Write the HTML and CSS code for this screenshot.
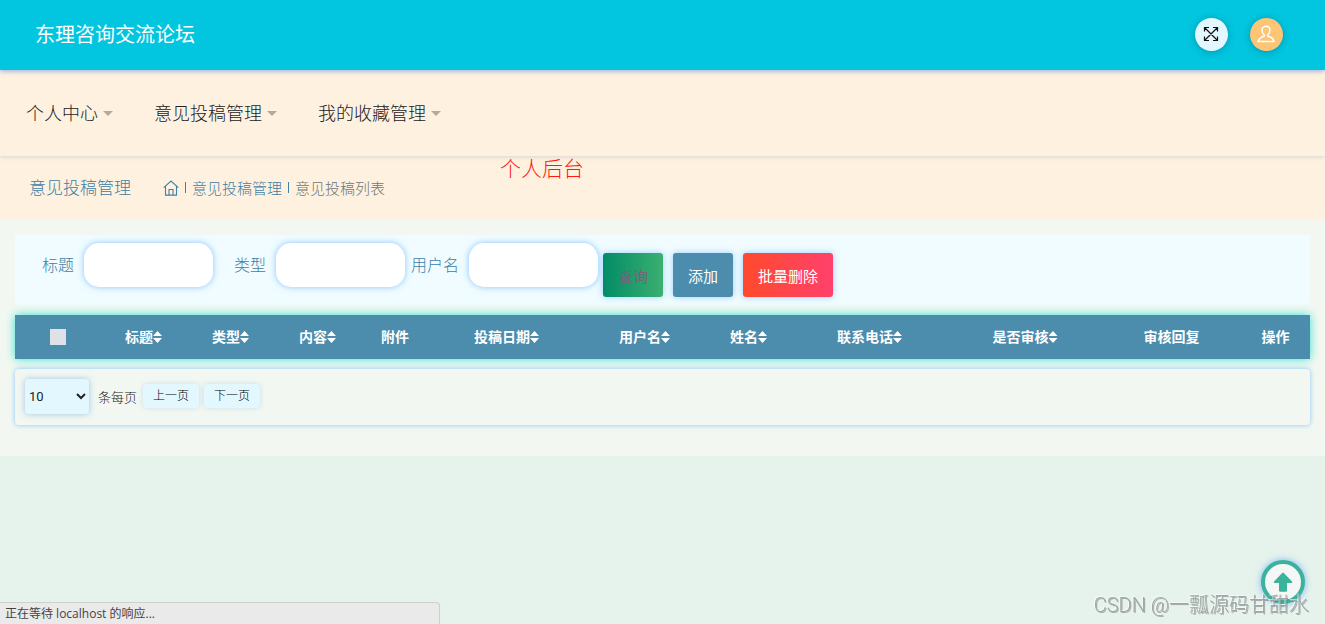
FILE: index.html
```html
<!DOCTYPE html>
<html lang="zh-CN">
<head>
<meta charset="utf-8">
<title>东理咨询交流论坛</title>
<link rel="stylesheet" href="styles.css">
</head>
<body>
<header class="topbar">
  <h1 class="brand">东理咨询交流论坛</h1>
  <div class="tools">
    <button class="tool" type="button" aria-label="全屏">
      <svg width="17" height="17" viewBox="0 0 17 17" fill="none" stroke="#111" stroke-width="1.2"><path d="M1.500 1.500l13 13M14.500 1.500l-13 13M1.500 5.500v-4h4.500M10 1.500h4.500v4M14.500 10.500v4H10M6 14.500H1.500v-4"/></svg>
    </button>
    <button class="tool tool-user" type="button" aria-label="用户">
      <svg width="19" height="18" viewBox="0 0 19 18" fill="none" stroke="#fff" stroke-width="1.4"><path d="M7.200 9.800C5.600 8.800 5 7.200 5 5.200 5 2.600 6.500 1.200 9 1.200s4 1.400 4 4c0 2-.6 3.600-2.200 4.600v1.400c3.200.6 5.400 2 6.200 5.300H1c.8-3.300 3-4.700 6.200-5.300z"/></svg>
    </button>
  </div>
</header>
<nav class="menu">
  <a class="menu-link" href="#">个人中心</a>
  <a class="menu-link" href="#">意见投稿管理</a>
  <a class="menu-link" href="#">我的收藏管理</a>
</nav>
<main class="content">
  <div class="crumbs">
    <h2 class="page-title">意见投稿管理</h2>
    <div class="trail">
      <a class="home" href="#" aria-label="首页"><svg width="16" height="16" viewBox="0 0 16 16" fill="none" stroke="currentColor" stroke-width="1.100"><path d="M.7 7.600L8 1l7.300 6.600M2.500 6.200v8.900h11V6.200M6 15V9.500h4V15"/></svg></a>
      <span class="sep"></span>
      <a class="crumb" href="#">意见投稿管理</a>
      <span class="sep"></span>
      <span class="current">意见投稿列表</span>
    </div>
    <span class="note">个人后台</span>
  </div>
  <div class="panel">
    <form class="search">
      <label class="label" for="title">标题</label>
      <input class="field" id="title" type="text">
      <label class="label label-wide" for="type">类型</label>
      <input class="field" id="type" type="text">
      <label class="label label-near" for="user">用户名</label>
      <input class="field" id="user" type="text">
      <div class="actions">
        <button class="btn btn-query" type="button">查询</button>
        <button class="btn" type="button">添加</button>
        <button class="btn btn-delete" type="button">批量删除</button>
      </div>
    </form>
    <table class="list">
      <colgroup>
        <col class="c-check"><col class="c-short"><col class="c-type"><col class="c-short"><col class="c-file"><col class="c-date"><col class="c-user"><col class="c-short"><col class="c-phone"><col class="c-audit"><col class="c-reply"><col class="c-action">
      </colgroup>
      <thead>
        <tr>
          <th><input class="check" type="checkbox" aria-label="全选"></th>
          <th><span class="sort">标题</span></th>
          <th><span class="sort">类型</span></th>
          <th><span class="sort">内容</span></th>
          <th>附件</th>
          <th><span class="sort">投稿日期</span></th>
          <th><span class="sort">用户名</span></th>
          <th><span class="sort">姓名</span></th>
          <th><span class="sort">联系电话</span></th>
          <th><span class="sort">是否审核</span></th>
          <th>审核回复</th>
          <th>操作</th>
        </tr>
      </thead>
    </table>
    <div class="pager">
      <select class="size" id="size"><option>10</option></select>
      <label class="size-label" for="size">条每页</label>
      <button class="page-btn" type="button">上一页</button>
      <button class="page-btn" type="button">下一页</button>
    </div>
  </div>
</main>
<button class="to-top" type="button" aria-label="返回顶部">
  <svg width="20" height="20" viewBox="0 0 20 20" fill="#3bb39c"><path d="M9.200 1a1 1 0 0 1 1.600 0l8 8.300c.8.9.4 1.700-.6 1.700H14v7.500c0 .8-.4 1.200-1 1.200H7c-.6 0-1-.4-1-1.200V11H1.800c-1 0-1.400-.8-.6-1.700z"/></svg>
</button>
<div class="watermark">CSDN @一瓢源码甘甜水</div>
<div class="status">正在等待 localhost 的响应...</div>
</body>
</html>
```
FILE: styles.css
```css
* { box-sizing: border-box; }
body {
  margin: 0;
  min-height: 100vh;
  background: #e6f3ec;
  color: #222;
  font-family: "Open Sans", "Noto Sans CJK SC", sans-serif;
  font-weight: 300;
  font-size: 14px;
}
a { color: inherit; text-decoration: none; }
button, input, select { font: inherit; border: 0; }
svg { display: block; }
h1, h2 { margin: 0; font-weight: 300; }

.topbar {
  position: relative;
  z-index: 3;
  display: flex;
  align-items: center;
  justify-content: space-between;
  height: 70px;
  padding: 0 42px 0 35px;
  background: #02c5df;
  box-shadow: 0 1px 5px rgba(70, 120, 220, .6);
}
.brand { color: #fff; font-size: 20px; line-height: 30px; font-weight: 400; }
.tools { display: flex; gap: 22px; padding-bottom: 2px; }
.tool {
  display: grid;
  place-items: center;
  width: 33px;
  height: 33px;
  padding: 0;
  border-radius: 50%;
  background: #e3f8fe;
  box-shadow: 0 1px 7px rgba(0, 80, 100, .4);
}
.tool-user { background: #fec576; }

.menu {
  position: relative;
  z-index: 2;
  display: flex;
  align-items: center;
  gap: 41px;
  height: 86px;
  padding: 0 26px;
  background: #fff1df;
  box-shadow: 0 1px 4px rgba(90, 130, 190, .25);
}
.menu-link { display: flex; align-items: center; gap: 5px; font-size: 18px; line-height: 28px; }
.menu-link::after {
  content: "";
  border: 5px solid transparent;
  border-top-color: #b3a99c;
  border-bottom: 0;
}

.content { padding-bottom: 31px; background: #f2f8f1; }
.crumbs {
  position: relative;
  z-index: 1;
  display: flex;
  align-items: center;
  gap: 32px;
  height: 63px;
  padding: 0 29px;
  background: #fff1df;
  color: #4080a4;
}
.page-title { font-size: 17px; line-height: 24px; }
.trail { display: flex; align-items: center; gap: 5px; font-size: 15px; line-height: 22px; }
.sep { width: 1px; height: 11px; margin: 0 1px; background: currentColor; }
.current { color: #6c7676; }
.note {
  position: absolute;
  left: 500px;
  top: -4px;
  color: #ff1a10;
  font-size: 21px;
  line-height: 32px;
}

.panel { display: flex; flex-direction: column; gap: 10px; padding: 16px 15px 0; }
.search {
  display: flex;
  align-items: flex-start;
  height: 70px;
  padding: 8px 27px 0;
  background: #f0fcff;
}
.label { padding-right: 10px; color: #4080a4; font-size: 16px; line-height: 44px; }
.label-wide { padding-left: 21px; }
.label-near { padding-left: 6px; }
.field {
  width: 129px;
  height: 44px;
  padding: 0 15px;
  border-radius: 15px;
  background: #fff;
  box-shadow: 0 0 6px rgba(80, 165, 255, .65);
}
.actions { display: flex; gap: 10px; padding: 10px 0 0 5px; }
.btn {
  height: 44px;
  padding: 0 15px;
  border-radius: 3px;
  background: #4c8cad;
  box-shadow: 0 0 6px rgba(80, 165, 255, .55);
  color: #fff;
  font-size: 15px;
  font-weight: 400;
}
.btn-query { background: linear-gradient(90deg, #028c67, #3bb070); color: #6b6878; }
.btn-delete { background: linear-gradient(90deg, #ff4a2c, #ff416c); }

.list {
  width: 100%;
  table-layout: fixed;
  border-collapse: collapse;
  background: #4c8cad;
  box-shadow: 0 0 9px rgba(0, 220, 205, .8);
  color: #fff;
}
.c-check { width: 86px; }
.c-short { width: 85px; }
.c-type { width: 89px; }
.c-file { width: 70px; }
.c-date { width: 153px; }
.c-user { width: 123px; }
.c-phone { width: 157px; }
.c-audit { width: 154px; }
.c-reply { width: 139px; }
.c-action { width: 69px; }
th { height: 44px; padding: 0; font-size: 14px; line-height: 20px; font-weight: 700; white-space: nowrap; }
.sort { display: inline-flex; align-items: center; }
.sort::after {
  content: "";
  width: 9px;
  height: 12px;
  background: #fff;
  clip-path: polygon(50% 0, 100% 42%, 0 42%, 0 58%, 100% 58%, 50% 100%, 0 58%, 0 42%);
}
.check {
  appearance: none;
  display: block;
  width: 16px;
  height: 16px;
  margin: 0 auto;
  background: #dee2e6;
}

.pager {
  display: flex;
  align-items: flex-start;
  height: 56px;
  padding: 10px;
  border-radius: 4px;
  box-shadow: 0 0 5px rgba(80, 165, 255, .65);
  font-size: 13px;
}
.size {
  width: 64px;
  height: 35px;
  border-radius: 4px;
  background: #e3f8fe;
  box-shadow: 0 0 6px rgba(80, 145, 225, .5);
  color: #222;
  font-family: Roboto, sans-serif;
  font-weight: 400;
}
.size-label { padding: 0 6px 0 9px; line-height: 36px; }
.page-btn {
  height: 24px;
  margin: 5px 5px 0 0;
  padding: 0 10px;
  border-radius: 4px;
  background: #e3f8fe;
  box-shadow: 0 0 5px rgba(80, 145, 225, .25);
  color: #000;
  font-size: 12px;
  line-height: 22px;
}

.to-top {
  position: fixed;
  right: 20px;
  bottom: 20px;
  display: grid;
  place-items: center;
  width: 44px;
  height: 44px;
  padding: 0;
  border: 4px solid #3bb39c;
  border-radius: 50%;
  background: #f5f6f6;
  box-shadow: 0 0 7px rgba(50, 140, 255, .6);
}
.watermark {
  position: fixed;
  right: 16px;
  bottom: 4px;
  color: #a0a6a5;
  font-family: Roboto, "Noto Sans CJK SC", sans-serif;
  font-size: 20px;
  line-height: 30px;
  text-shadow: -1px -1px 0 rgba(255, 255, 255, .6), 1px 1px 0 rgba(100, 105, 105, .5);
}
.status {
  position: fixed;
  left: 0;
  bottom: 0;
  width: 440px;
  height: 22px;
  padding-left: 5px;
  border: 1px solid #ccd0cf;
  border-width: 1px 1px 0 0;
  border-radius: 0 4px 0 0;
  background: #eaeaea;
  color: #444;
  font-size: 12px;
  font-weight: 400;
  line-height: 22px;
}
```
